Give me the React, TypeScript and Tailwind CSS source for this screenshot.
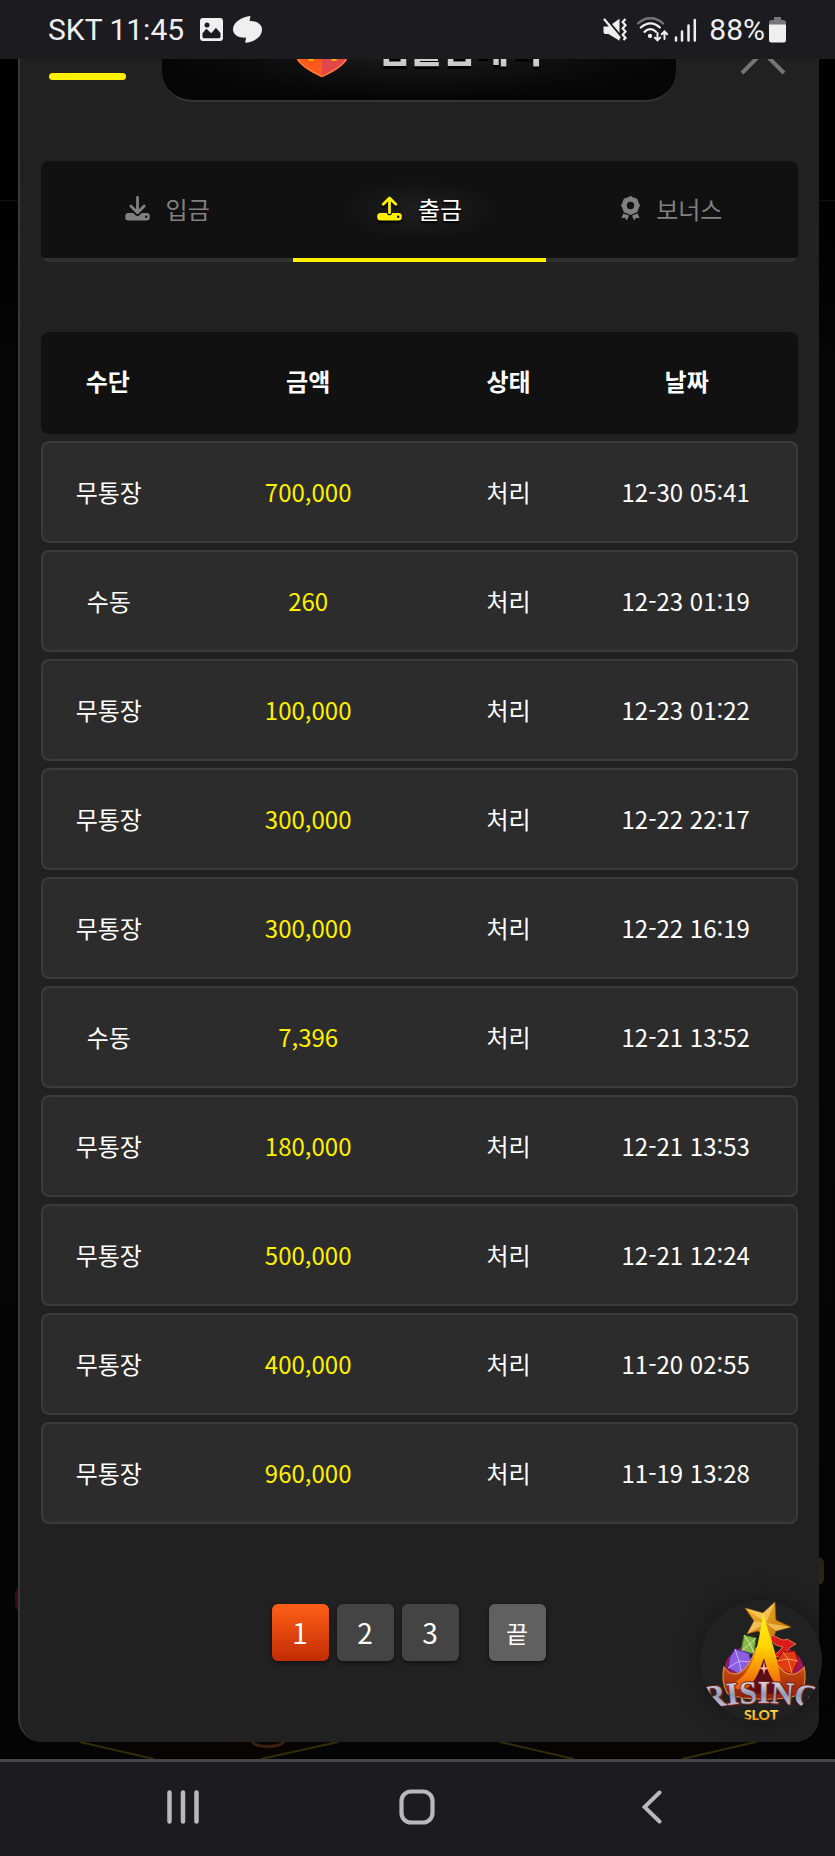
import { useState } from "react";

const rows = [
  { method: "무통장", amount: "700,000", status: "처리", date: "12-30 05:41" },
  { method: "수동", amount: "260", status: "처리", date: "12-23 01:19" },
  { method: "무통장", amount: "100,000", status: "처리", date: "12-23 01:22" },
  { method: "무통장", amount: "300,000", status: "처리", date: "12-22 22:17" },
  { method: "무통장", amount: "300,000", status: "처리", date: "12-22 16:19" },
  { method: "수동", amount: "7,396", status: "처리", date: "12-21 13:52" },
  { method: "무통장", amount: "180,000", status: "처리", date: "12-21 13:53" },
  { method: "무통장", amount: "500,000", status: "처리", date: "12-21 12:24" },
  { method: "무통장", amount: "400,000", status: "처리", date: "11-20 02:55" },
  { method: "무통장", amount: "960,000", status: "처리", date: "11-19 13:28" },
];

const tabs = [
  { id: "deposit", label: "입금", Icon: DepositIcon },
  { id: "withdraw", label: "출금", Icon: WithdrawIcon },
  { id: "bonus", label: "보너스", Icon: BonusIcon },
];

function DepositIcon() {
  return (
    <svg width="25" height="25" viewBox="0 0 25 25" fill="none" aria-hidden="true">
      <path
        fill="currentColor"
        fillRule="evenodd"
        d="M3.5 17H8l3 2.6a2.2 2.2 0 0 0 3 0L17 17h4.5a3.3 3.3 0 0 1 3.3 3.3v.9a3.3 3.3 0 0 1-3.3 3.3h-18A3.3 3.3 0 0 1 .2 21.2v-.9A3.3 3.3 0 0 1 3.5 17Zm17.7 2.5a1.2 1.2 0 1 0 0 2.4 1.2 1.2 0 0 0 0-2.4Z"
      />
      <path d="M12.5 1.5v15M5.8 10l6.7 6.7 6.7-6.7" stroke="currentColor" strokeWidth="2.8" strokeLinecap="round" strokeLinejoin="round" />
    </svg>
  );
}

function WithdrawIcon() {
  return (
    <svg
      width="25"
      height="25"
      viewBox="0 0 25 25"
      fill="none"
      className="overflow-visible text-[#fff000] drop-shadow-[0_2px_1px_#000]"
      aria-hidden="true"
    >
      <path
        fill="currentColor"
        fillRule="evenodd"
        d="M3.5 17h6.3c.3 1.4 1.4 2.3 2.7 2.3s2.4-.9 2.7-2.3h6.3a3.3 3.3 0 0 1 3.3 3.3v.9a3.3 3.3 0 0 1-3.3 3.3h-18A3.3 3.3 0 0 1 .2 21.2v-.9A3.3 3.3 0 0 1 3.5 17Zm17.7 2.5a1.2 1.2 0 1 0 0 2.4 1.2 1.2 0 0 0 0-2.4Z"
      />
      <path d="M12.5 16.8V2.3M6.2 8.2l6.3-6.3 6.3 6.3" stroke="currentColor" strokeWidth="2.8" strokeLinecap="round" strokeLinejoin="round" />
    </svg>
  );
}

function BonusIcon() {
  return (
    <svg width="19" height="25" viewBox="0 0 19 25" fill="currentColor" aria-hidden="true">
      <circle cx="9.5" cy="9.5" r="6.2" fill="none" stroke="currentColor" strokeWidth="5" />
      <g>
        <circle cx="9.5" cy="2" r="1.9" />
        <circle cx="14.8" cy="4.2" r="1.9" />
        <circle cx="17" cy="9.5" r="1.9" />
        <circle cx="14.8" cy="14.8" r="1.9" />
        <circle cx="9.5" cy="17" r="1.9" />
        <circle cx="4.2" cy="14.8" r="1.9" />
        <circle cx="2" cy="9.5" r="1.9" />
        <circle cx="4.2" cy="4.2" r="1.9" />
      </g>
      <path d="M2.3 17.4 8 19.6l-2.1 4.9-2-2.7-3.5.5ZM16.7 17.4 11 19.6l2.1 4.9 2-2.7 3.5.5Z" />
    </svg>
  );
}

function StatusBar() {
  return (
    <div className="relative z-10 flex h-[59px] shrink-0 items-center justify-between bg-[#1c1b20] pr-[49px] pl-12 font-[Roboto,sans-serif] text-3xl text-[#efefef]">
      <div className="flex items-center">
        <span>SKT 11:45</span>
        <svg className="ml-4" width="23" height="23" viewBox="0 0 23 23" aria-hidden="true">
          <rect width="23" height="23" rx="3" fill="#efefef" />
          <circle cx="7" cy="7" r="2.5" fill="#1c1b20" />
          <path d="M2.5 18.5v-3.3l3.8-4.4 5 4.5 4.6-5.6 4.6 5.2v3.6c0 1-.8 1.8-1.8 1.8H4.3c-1 0-1.8-.8-1.8-1.8Z" fill="#1c1b20" />
        </svg>
        <svg className="ml-[10px]" width="29" height="27" viewBox="0 0 29 27" fill="#efefef" aria-hidden="true">
          <path d="M17.5 0 16.6 5C23 4.6 29 8 29 13.6c0 7.5-8 12.6-16.8 13.2l.8-5.2C5.5 22 0 18.6 0 13.4 0 6.5 8.5.8 17.5 0Z" />
        </svg>
      </div>
      <div className="flex items-center">
        <svg width="24" height="24" viewBox="0 0 24 24" aria-hidden="true">
          <path d="M.5 8.5h5L16.5.8v22L5.5 16H2.3A1.8 1.8 0 0 1 .5 14.2Z" fill="#efefef" />
          <path d="m1.5-.5 17 20" stroke="#1c1b20" strokeWidth="3" />
          <path d="m1.5 1.5 15 18" stroke="#efefef" strokeWidth="2.2" strokeLinecap="round" />
          <path d="m22.5 1-2.8 3 2.8 3.2-2.8 3.2 2.8 3.2-2.8 3.2 2.8 3.2-2 2" stroke="#efefef" strokeWidth="2.2" fill="none" />
        </svg>
        <svg className="ml-[9px]" width="33" height="25" viewBox="0 0 33 25" fill="none" stroke="#efefef" strokeWidth="2.3" strokeLinecap="round" aria-hidden="true">
          <path d="M2 6.5C9-.5 20-.5 27 6.5" stroke="#77767a" />
          <path d="M4.8 10.5c6-5.6 13.5-5.6 19 0" />
          <path d="M8.5 14.8c3.6-3.4 8-3.4 11.5 0" />
          <circle cx="14" cy="19" r="1" fill="#efefef" />
          <path d="M21.5 16v7M18.8 20.6l2.7 2.7 2.7-2.7M28.5 22v-7M25.8 17.2l2.7-2.7 2.7 2.7" strokeWidth="2" />
        </svg>
        <svg className="ml-[5px]" width="23" height="24" viewBox="0 0 23 24" stroke="#efefef" strokeWidth="2.5" strokeLinecap="round" aria-hidden="true">
          <path d="M2 19.5v3M8 13.5v9M14.5 7.5v15M20.8 2v20.5" />
        </svg>
        <span className="ml-3">88%</span>
        <svg className="ml-1" width="17" height="26" viewBox="0 0 17 26" aria-hidden="true">
          <path d="M5 0h7v3h2.5A2.5 2.5 0 0 1 17 5.5V10H0V5.5A2.5 2.5 0 0 1 2.5 3H5Z" fill="#77767a" />
          <path d="M0 7.5h17V23a2.5 2.5 0 0 1-2.5 2.5h-12A2.5 2.5 0 0 1 0 23Z" fill="#efefef" />
        </svg>
      </div>
    </div>
  );
}

function PanelHeader() {
  return (
    <header className="-mt-[57px] flex items-center pr-[33px] pl-[29px]">
      <button aria-label="메뉴" className="flex h-14 w-[77px] flex-col justify-between">
        <span className="h-[7px] w-full rounded-sm bg-[#fff000]" />
        <span className="h-[7px] w-full rounded-sm bg-[#fff000]" />
        <span className="h-[7px] w-full rounded-sm bg-[#fff000]" />
      </button>
      <div className="mr-16 ml-9 flex h-[100px] flex-1 items-center justify-center gap-[29px] rounded-[30px] border-b-2 border-[#333] bg-radial from-[#1d1d1d] to-[#060606] to-70%">
        <svg width="52" height="52" viewBox="0 0 52 52" aria-hidden="true">
          <path d="M26 1 51 14v20c0 4-13 13-25 18Z" fill="#e2474b" />
          <path d="M26 1 1 14v20c0 4 13 13 25 18Z" fill="#fe5a1c" />
          <path d="M1.5 33c2 6 13 13.5 24.5 18.5C37.5 46.5 48.5 39 50.5 33" fill="none" stroke="#ff7b33" strokeWidth="1.5" />
          <ellipse cx="15" cy="34" rx="3" ry="2" fill="#f7b500" />
          <ellipse cx="38" cy="34" rx="3" ry="2" fill="#f7b500" />
        </svg>
        <h1 className="bg-linear-to-b from-white to-[#b5b5b5] bg-clip-text pb-2 text-4xl leading-[52px] font-black text-transparent drop-shadow-[0_3px_0_#000]">
          입출금내역
        </h1>
      </div>
      <button aria-label="닫기">
        <svg width="46" height="46" viewBox="0 0 46 46" stroke="#757575" strokeWidth="4" aria-hidden="true">
          <path d="m2 2 42 42M44 2 2 44" />
        </svg>
      </button>
    </header>
  );
}

function FloatingLogo() {
  return (
    <a href="#home" aria-label="RISING SLOT" className="block rounded-full bg-[#212121] shadow-[0_0_24px_rgba(0,0,0,0.35)]">
      <svg width="122" height="122" viewBox="0 0 122 122">
        <defs>
          <clipPath id="disc">
            <circle cx="61" cy="60" r="61" />
          </clipPath>
          <linearGradient id="flame" x1="0" y1="0" x2="0" y2="1">
            <stop offset="0" stopColor="#fff21a" />
            <stop offset=".45" stopColor="#ffd400" />
            <stop offset="1" stopColor="#f05a0a" />
          </linearGradient>
          <linearGradient id="bowl" x1="0" y1="0" x2="0" y2="1">
            <stop offset="0" stopColor="#f06a14" />
            <stop offset="1" stopColor="#8f1c08" />
          </linearGradient>
          <linearGradient id="gold" x1="0" y1="0" x2="1" y2="1">
            <stop offset="0" stopColor="#ffb931" />
            <stop offset="1" stopColor="#b76a08" />
          </linearGradient>
          <linearGradient id="steel" x1="0" y1="0" x2="0" y2="1">
            <stop offset="0" stopColor="#ffffff" />
            <stop offset=".5" stopColor="#8f99b8" />
            <stop offset="1" stopColor="#e4e8f4" />
          </linearGradient>
          <linearGradient id="slot" x1="0" y1="0" x2="0" y2="1">
            <stop offset=".2" stopColor="#ffe14a" />
            <stop offset="1" stopColor="#f08a00" />
          </linearGradient>
          <path id="arch" d="M4 109Q61 97 118 109" />
        </defs>
        <g clipPath="url(#disc)">
          <path d="M75 2 76 20 91 27 76 31 72 42 58 31 47 34 54 21 45 8 63 13Z" fill="url(#gold)" stroke="#8a4a05" strokeWidth=".8" />
          <path d="M75 2 66 23 45 8l18 5ZM66 23l25 4-15 4ZM66 23 47 34l7-13Z" fill="#ffd873" opacity=".6" />
          <path d="M25 66c0-8 10-16 22-22l-4 36-14-4ZM103 66c0-8-10-16-22-22l4 36 14-4Z" fill="#a01558" />
          <path d="m44 35 12 3-2 16-13-3Z" fill="#86b84a" stroke="#3f6b1e" />
          <path d="m44 35 6 9 6-6M50 44l-9 7M50 44l4 9" stroke="#c8e69a" fill="none" />
          <path d="m35 49 14 4 2 9-9 14-14-8 2-11Z" fill="#8b5fe0" stroke="#4d2b9a" />
          <path d="m35 49 4 12 12 1M39 61l-11 7M39 61l3 15" stroke="#c5adff" fill="none" />
          <path d="M71 35c8 2 11 7 16 4l9 5c-6 3-10 6-13 14l-9-2 9-9c-5-1-9-2-12-7Z" fill="#d81c1c" stroke="#ff8a4a" strokeWidth=".8" />
          <path d="m83 52 12-1 3 10-6 13-13-5-2-9Z" fill="#e23a12" stroke="#8a0f05" />
          <path d="m83 52 5 7 10 2M88 59l-11 2M88 59l4 14" stroke="#ff9b5a" fill="none" />
          <path
            d="M24 67C33 80 47 75 56 48h15c7 27 22 33 33 19 2 9 1 20-3 27-18 7-55 7-73 0-5-7-6-18-4-27Z"
            fill="url(#bowl)"
            stroke="#e08a3c"
            strokeWidth="1.2"
          />
          <path d="M64 58 46 94h36Z" fill="#5c0d18" />
          <path d="M63 12c-3 23-6 44-17 60-5 7-11 11-19 14 9 4 17 4 21 1 8-6 12-18 16-29 3 12 7 23 17 31-1-30-11-49-18-77Z" fill="url(#flame)" />
          <path d="m64 61 1 6 4 1-4 2-1 5-1-5-4-2 4-1Z" fill="#ffb0a0" />
          <text
            fontFamily="Liberation Serif, serif"
            fontWeight="700"
            fontSize="32"
            fill="url(#steel)"
            stroke="#7d2416"
            strokeWidth="2"
            paintOrder="stroke"
            textAnchor="middle"
          >
            <textPath href="#arch" startOffset="50%">
              RISING
            </textPath>
          </text>
          <text x="61" y="120" fontFamily="Lato, sans-serif" fontWeight="900" fontSize="14" fill="url(#slot)" textAnchor="middle">
            SLOT
          </text>
        </g>
      </svg>
    </a>
  );
}

function NavBar() {
  return (
    <nav className="relative z-10 flex h-[97px] shrink-0 items-center justify-around border-t-[3px] border-[#45444b] bg-[#1c1b20] px-[66px] pb-1">
      <button aria-label="최근 앱" className="flex w-16 justify-center">
        <svg width="32" height="34" viewBox="0 0 32 34" stroke="#b9b9bb" strokeWidth="4.5" strokeLinecap="round" aria-hidden="true">
          <path d="M2.5 2.5v29M16 2.5v29M29.5 2.5v29" />
        </svg>
      </button>
      <button aria-label="홈" className="flex w-16 justify-center">
        <svg width="36" height="36" viewBox="0 0 36 36" fill="none" stroke="#b9b9bb" strokeWidth="4.2" aria-hidden="true">
          <rect x="2.5" y="2.5" width="31" height="31" rx="9.5" />
        </svg>
      </button>
      <button aria-label="뒤로" className="flex w-16 justify-center">
        <svg width="20" height="34" viewBox="0 0 20 34" fill="none" stroke="#b9b9bb" strokeWidth="4" strokeLinecap="round" aria-hidden="true">
          <path d="M17.5 2.5 2.5 17l15 14.5" />
        </svg>
      </button>
    </nav>
  );
}

export default function App() {
  const [tab, setTab] = useState("withdraw");
  const [page, setPage] = useState(1);

  return (
    <div
      lang="ko"
      className="relative flex min-h-screen flex-col overflow-hidden bg-linear-to-b from-black via-[#060606] via-20% to-[#040404] font-['Noto_Sans_CJK_KR',sans-serif] text-2xl text-white"
    >
      <StatusBar />

      <main className="relative flex-1 pr-4 pb-[17px] pl-[18px]">
        {/* dimmed lobby behind the modal */}
        <div className="absolute inset-x-0 top-[141px] h-px bg-[#0f0f0f]" />
        <div className="absolute bottom-[148px] left-[15px] h-6 w-3 rounded-full bg-[#3a0618]" />
        <div className="absolute right-[11px] bottom-[174px] h-7 w-3 rounded-full bg-[#2c2412]" />
        <svg className="absolute inset-x-0 bottom-0 h-[17px] w-full" viewBox="0 0 835 17" preserveAspectRatio="none" aria-hidden="true">
          <path d="M80 0h258l-78 17H154ZM500 0h256l-74 17H574Z" fill="#080401" />
          <path d="m80 0 74 17M338 0l-77 17M500 0l74 17M756 0l-74 17" stroke="#332d08" strokeWidth="2" />
          <path d="M252 0c6 6 26 6 32 0" fill="none" stroke="#3a200d" strokeWidth="3" />
        </svg>

        <section className="relative overflow-hidden rounded-b-3xl border-l-2 border-[#393939] bg-[#212121] pb-[81px]">
          <PanelHeader />

          <div className="px-[21px] pt-[59px]">
            <div role="tablist" className="grid grid-cols-3 overflow-hidden rounded-lg bg-[#111]">
              {tabs.map(({ id, label, Icon }) => (
                <button
                  key={id}
                  role="tab"
                  aria-selected={tab === id}
                  onClick={() => setTab(id)}
                  className={
                    tab === id
                      ? "flex h-[101px] items-center justify-center gap-4 border-b-4 border-[#fff000] bg-radial from-[#1f1f1f] to-[#111] to-45% pb-[2px] text-white [text-shadow:0_2px_2px_#000]"
                      : "flex h-[101px] items-center justify-center gap-4 border-b-4 border-[#303030] pb-[2px] text-[#808080]"
                  }
                >
                  <Icon />
                  <span>{label}</span>
                </button>
              ))}
            </div>

            <table className="mt-[63px] w-full table-fixed border-separate border-spacing-x-0 border-spacing-y-[7px] text-center">
              <thead>
                <tr className="h-[102px]">
                  <th className="w-3/17 rounded-l-lg bg-[#111] p-0 pb-1">수단</th>
                  <th className="w-6/17 bg-[#111] p-0 pb-1">금액</th>
                  <th className="w-3/17 bg-[#111] p-0 pb-1">상태</th>
                  <th className="w-5/17 rounded-r-lg bg-[#111] p-0 pb-1">날짜</th>
                </tr>
              </thead>
              <tbody>
                {rows.map((r) => (
                  <tr key={r.date} className="h-[102px]">
                    <td className="rounded-l-lg border-y-2 border-l-2 border-[#3b3b3b] bg-[#2c2c2c] p-0">{r.method}</td>
                    <td className="border-y-2 border-[#3b3b3b] bg-[#2c2c2c] p-0 text-[#fff000]">{r.amount}</td>
                    <td className="border-y-2 border-[#3b3b3b] bg-[#2c2c2c] p-0">{r.status}</td>
                    <td className="rounded-r-lg border-y-2 border-r-2 border-[#3b3b3b] bg-[#2c2c2c] p-0">{r.date}</td>
                  </tr>
                ))}
              </tbody>
            </table>

            <div className="mt-[73px] flex justify-center gap-2">
              {[1, 2, 3].map((n) => (
                <button
                  key={n}
                  onClick={() => setPage(n)}
                  className={
                    page === n
                      ? "size-[57px] rounded-md bg-linear-to-b from-[#ff5f17] to-[#c22a05] text-[28px] shadow-[0_2px_4px_rgba(0,0,0,0.5)]"
                      : "size-[57px] rounded-md bg-[#444] text-[28px] shadow-[0_2px_4px_rgba(0,0,0,0.5)]"
                  }
                >
                  {n}
                </button>
              ))}
              <button
                onClick={() => setPage(3)}
                className="mx-[22px] size-[57px] rounded-md bg-[#606060] shadow-[0_2px_4px_rgba(0,0,0,0.5)]"
              >
                끝
              </button>
            </div>
          </div>
        </section>

        <div className="absolute right-[13px] bottom-[37px]">
          <FloatingLogo />
        </div>
      </main>

      <NavBar />
    </div>
  );
}
